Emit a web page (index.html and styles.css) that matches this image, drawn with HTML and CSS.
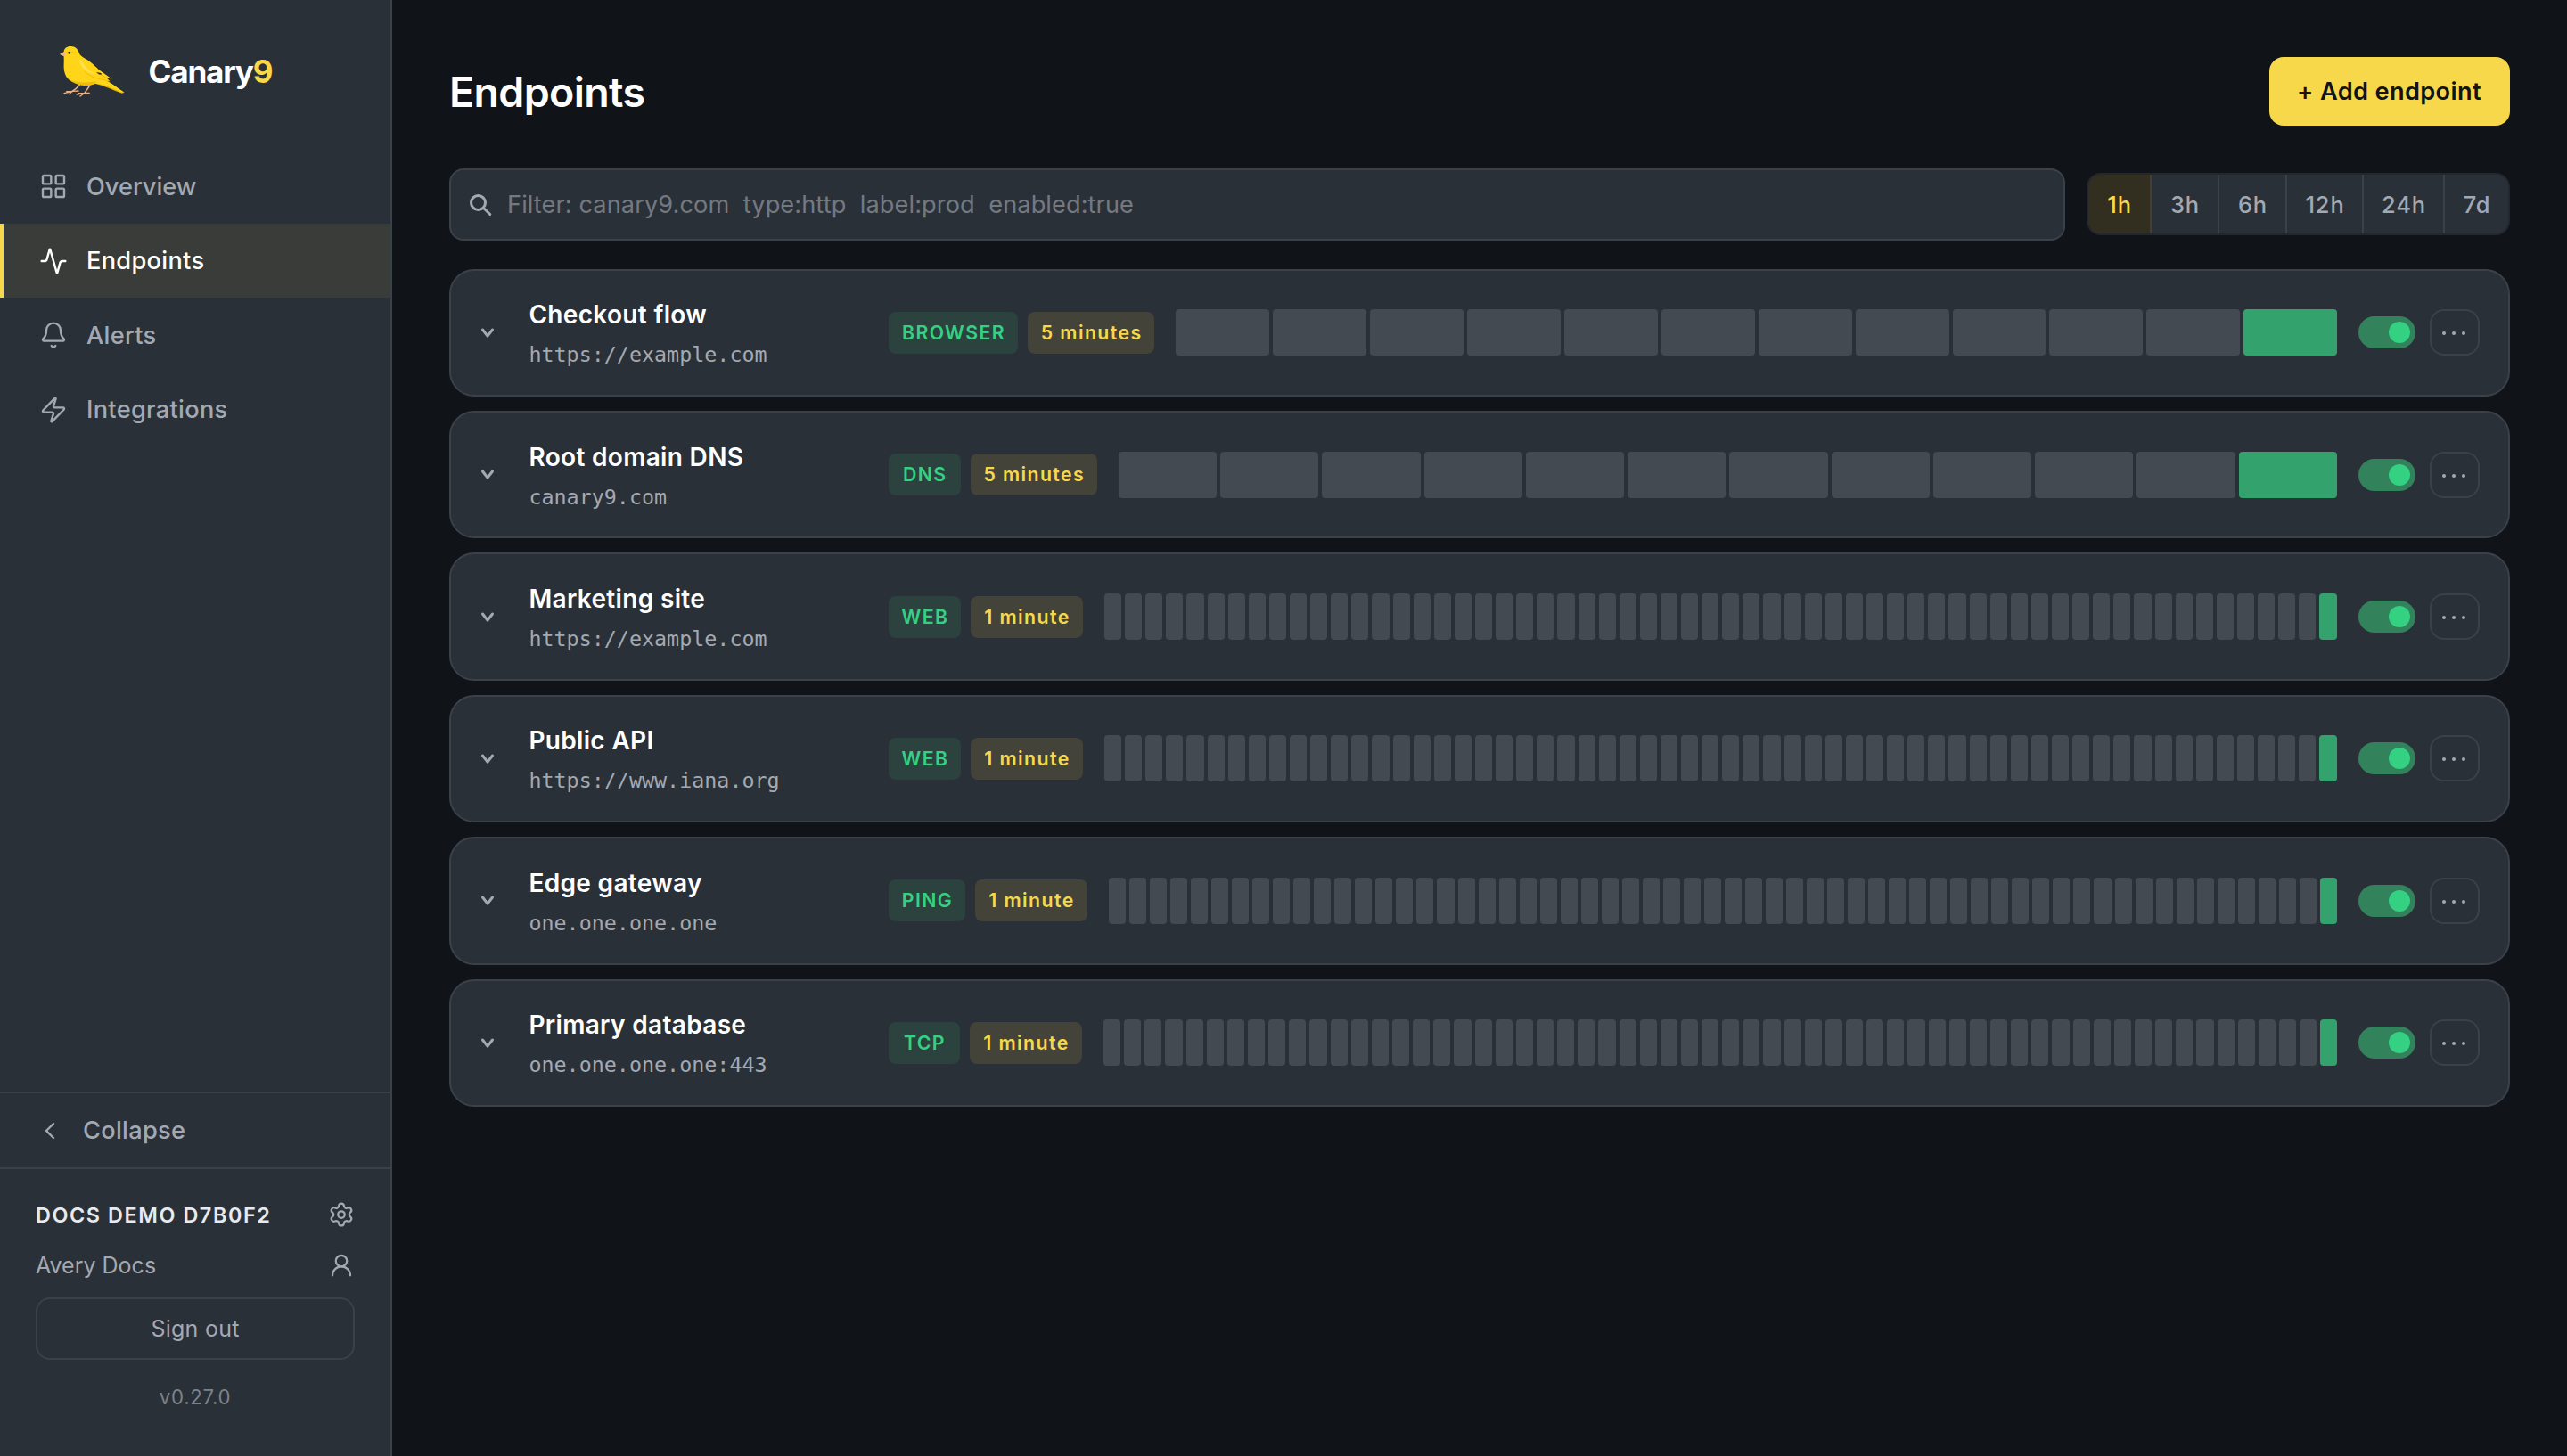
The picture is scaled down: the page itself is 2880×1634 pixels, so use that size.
FILE: index.html
```
<!DOCTYPE html>
<html lang="en">
<head>
<meta charset="utf-8">
<title>Endpoints – Canary9</title>
<link rel="stylesheet" href="styles.css">
</head>
<body>
<div class="app">
  <aside class="sidebar">
    <div class="brand">
      <svg class="brand-bird" viewBox="0 0 270 240" aria-hidden="true">
        <g fill="none" stroke="#e9b184" stroke-linecap="round" stroke-linejoin="round">
          <path stroke-width="4.5" d="M88 166C80 176 72 182 62 188M122 168C116 178 110 185 105 193"/>
          <path stroke-width="4" d="M64 187 36 194M64 187 44 188M64 187 52 197M66 187 84 186M105 193 78 198M105 193 84 194M105 193 90 204M106 193 121 193"/>
        </g>
        <path fill="#e8b400" d="M144 148C180 152 208 172 239 191L230 194C200 184 176 170 140 162Z"/>
        <path fill="#ffd51a" d="M150 141C184 148 206 170 236 190L226 190C196 176 172 164 134 160Z"/>
        <path fill="#ffd51a" d="M35 58C34 43 45 36 58 36C74 36 83 46 87 60C93 72 106 76 118 84C134 95 145 110 158 122C164 130 166 142 158 150C148 158 140 164 122 167C96 170 66 160 50 146C36 132 34 112 35 92C36 78 34 70 35 58Z"/>
        <path fill="#efbd08" d="M50 146C74 158 106 160 146 154C138 163 130 166 118 167.500C92 169 66 160 50 146Z"/>
        <path fill="#ffd51a" d="M85 80C112 76 136 98 152 114L197 146L180 143L190 154C156 150 118 142 100 116C92 104 86 92 85 80Z"/>
        <path fill="#ffe14f" d="M86 80C98 84 104 102 116 114C126 122 136 126 146 129C124 128 104 118 97 106C91 96 87 90 86 80Z"/>
        <path fill="none" stroke="#e8b400" stroke-width="2" d="M104 120C124 140 154 146 188 153M150 128 182 143"/>
        <path fill="#30280c" d="M144 123 160 126 162 131 152 130ZM178 142 197 146 188 146Z"/>
        <path fill="#f0b48c" d="M36 54 21 62 26 66 36 70 41 62Z"/>
        <path fill="none" stroke="#e8b400" stroke-width="2" d="M42 58C48 54 60 53 66 57"/>
        <circle cx="53" cy="58" r="4" fill="#1c1608"/>
      </svg>
      <span class="brand-name">Canary<span class="brand-accent">9</span></span>
    </div>
    <nav class="nav">
      <a class="nav-item nav-item-overview"><svg class="icon" viewBox="0 0 24 24"><rect x="3" y="3" width="7" height="7" rx="1"/><rect x="14" y="3" width="7" height="7" rx="1"/><rect x="14" y="14" width="7" height="7" rx="1"/><rect x="3" y="14" width="7" height="7" rx="1"/></svg><span>Overview</span></a>
      <a class="nav-item nav-item-active"><svg class="icon" viewBox="0 0 24 24"><path d="M22 12h-2.480a2 2 0 0 0-1.930 1.460l-2.350 8.360a.25.25 0 0 1-.48 0L9.240 2.180a.25.25 0 0 0-.48 0l-2.350 8.360A2 2 0 0 1 4.490 12H2"/></svg><span>Endpoints</span></a>
      <a class="nav-item"><svg class="icon" viewBox="0 0 24 24"><path d="M10.268 21a2 2 0 0 0 3.464 0"/><path d="M3.262 15.326A1 1 0 0 0 4 17h16a1 1 0 0 0 .74-1.673C19.410 13.956 18 12.499 18 8A6 6 0 0 0 6 8c0 4.499-1.411 5.956-2.738 7.326"/></svg><span>Alerts</span></a>
      <a class="nav-item"><svg class="icon" viewBox="0 0 24 24"><path d="M4 14a1 1 0 0 1-.78-1.630l9.900-10.200a.5.5 0 0 1 .86.46l-1.920 6.020A1 1 0 0 0 13 10h7a1 1 0 0 1 .78 1.630l-9.900 10.200a.5.5 0 0 1-.86-.46l1.920-6.020A1 1 0 0 0 11 14z"/></svg><span>Integrations</span></a>
    </nav>
    <button class="collapse"><svg class="icon" viewBox="0 0 24 24"><path d="m15 18-6-6 6-6"/></svg><span>Collapse</span></button>
    <div class="account">
      <div class="account-row">
        <span class="org">DOCS DEMO D7B0F2</span>
        <svg class="icon icon-sm" viewBox="0 0 24 24"><path d="M9.671 4.136a2.340 2.340 0 0 1 4.659 0 2.340 2.340 0 0 0 3.319 1.915 2.340 2.340 0 0 1 2.330 4.033 2.340 2.340 0 0 0 0 3.831 2.340 2.340 0 0 1-2.330 4.033 2.340 2.340 0 0 0-3.319 1.915 2.340 2.340 0 0 1-4.659 0 2.340 2.340 0 0 0-3.320-1.915 2.340 2.340 0 0 1-2.330-4.033 2.340 2.340 0 0 0 0-3.831A2.340 2.340 0 0 1 6.350 6.051a2.340 2.340 0 0 0 3.319-1.915"/><circle cx="12" cy="12" r="3"/></svg>
      </div>
      <div class="account-row">
        <span class="user">Avery Docs</span>
        <svg class="icon icon-sm" viewBox="0 0 24 24"><circle cx="12" cy="8" r="5"/><path d="M20 21a8 8 0 0 0-16 0"/></svg>
      </div>
      <button class="sign-out">Sign out</button>
      <div class="version">v0.27.0</div>
    </div>
  </aside>
  <main class="main">
    <header class="page-head">
      <h1 class="page-title">Endpoints</h1>
      <button class="add-button">+ Add endpoint</button>
    </header>
    <div class="toolbar">
      <div class="search">
        <svg class="search-icon" viewBox="0 0 28 28"><circle cx="11.500" cy="11.500" r="8"/><path d="m17.500 17.500 7.300 7"/></svg>
        <span class="search-hint">Filter: canary9.com  type:http  label:prod  enabled:true</span>
      </div>
      <div class="ranges">
        <span class="range range-active">1h</span><span class="range">3h</span><span class="range">6h</span><span class="range range-12h">12h</span><span class="range range-24h">24h</span><span class="range range-7d">7d</span>
      </div>
    </div>
    <section class="list">
      <article class="card">
        <svg class="chevron" viewBox="0 0 18 18"><path d="M3.500 5 9 12.200 14.500 5"/></svg>
        <div class="info"><div class="name">Checkout flow</div><div class="target">https://example.com</div></div>
        <div class="badges"><span class="badge badge-type badge-browser">BROWSER</span><span class="badge badge-interval badge-5m">5 minutes</span></div>
        <div class="bars" data-count="12"></div>
        <span class="toggle"></span>
        <button class="more"><i></i><i></i><i></i></button>
      </article>
      <article class="card">
        <svg class="chevron" viewBox="0 0 18 18"><path d="M3.500 5 9 12.200 14.500 5"/></svg>
        <div class="info"><div class="name">Root domain DNS</div><div class="target">canary9.com</div></div>
        <div class="badges"><span class="badge badge-type badge-dns">DNS</span><span class="badge badge-interval badge-5m">5 minutes</span></div>
        <div class="bars" data-count="12"></div>
        <span class="toggle"></span>
        <button class="more"><i></i><i></i><i></i></button>
      </article>
      <article class="card">
        <svg class="chevron" viewBox="0 0 18 18"><path d="M3.500 5 9 12.200 14.500 5"/></svg>
        <div class="info"><div class="name">Marketing site</div><div class="target">https://example.com</div></div>
        <div class="badges"><span class="badge badge-type badge-web">WEB</span><span class="badge badge-interval">1 minute</span></div>
        <div class="bars" data-count="60"></div>
        <span class="toggle"></span>
        <button class="more"><i></i><i></i><i></i></button>
      </article>
      <article class="card">
        <svg class="chevron" viewBox="0 0 18 18"><path d="M3.500 5 9 12.200 14.500 5"/></svg>
        <div class="info"><div class="name">Public API</div><div class="target">https://www.iana.org</div></div>
        <div class="badges"><span class="badge badge-type badge-web">WEB</span><span class="badge badge-interval">1 minute</span></div>
        <div class="bars" data-count="60"></div>
        <span class="toggle"></span>
        <button class="more"><i></i><i></i><i></i></button>
      </article>
      <article class="card">
        <svg class="chevron" viewBox="0 0 18 18"><path d="M3.500 5 9 12.200 14.500 5"/></svg>
        <div class="info"><div class="name">Edge gateway</div><div class="target">one.one.one.one</div></div>
        <div class="badges"><span class="badge badge-type badge-ping">PING</span><span class="badge badge-interval">1 minute</span></div>
        <div class="bars" data-count="60"></div>
        <span class="toggle"></span>
        <button class="more"><i></i><i></i><i></i></button>
      </article>
      <article class="card">
        <svg class="chevron" viewBox="0 0 18 18"><path d="M3.500 5 9 12.200 14.500 5"/></svg>
        <div class="info"><div class="name">Primary database</div><div class="target">one.one.one.one:443</div></div>
        <div class="badges"><span class="badge badge-type">TCP</span><span class="badge badge-interval">1 minute</span></div>
        <div class="bars" data-count="60"></div>
        <span class="toggle"></span>
        <button class="more"><i></i><i></i><i></i></button>
      </article>
    </section>
  </main>
</div>
<script src="app.js"></script>
</body>
</html>
```
FILE: styles.css
```
:root {
  --bg: #101318;
  --panel: #2a3038;
  --line: #3b4149;
  --muted: #a3a9b2;
  --yellow: #f7d84b;
  --green: #35d182;
}

* { box-sizing: border-box; }

body {
  margin: 0;
  background: var(--bg);
  color: #fff;
  font-family: Inter, "Liberation Sans", sans-serif;
}

button {
  margin: 0;
  padding: 0;
  border: 0;
  background: none;
  color: inherit;
  font: inherit;
}

.app { display: flex; height: 1634px; }

/* Sidebar */
.sidebar {
  display: flex;
  flex-direction: column;
  flex: none;
  width: 440px;
  background: var(--panel);
  border-right: 2px solid var(--line);
  color: var(--muted);
}

.brand {
  display: flex;
  align-items: center;
  gap: 16.500px;
  height: 167.300px;
  padding: 40px 0 47.300px 60px;
}
.brand-bird { width: 90px; height: 80px; }
.brand-name { color: #fff; font-size: 35px; font-weight: 700; letter-spacing: -1.150px; }
.brand-accent { color: var(--yellow); }

.icon {
  flex: none;
  width: 32px;
  height: 32px;
  fill: none;
  stroke: currentColor;
  stroke-width: 1.8;
  stroke-linecap: round;
  stroke-linejoin: round;
}
.icon-sm { width: 30px; height: 30px; }

.nav { flex: 1; }
.nav-item,
.collapse {
  display: flex;
  align-items: center;
  gap: 21px;
  font-size: 27.200px;
  font-weight: 500;
  letter-spacing: .3px;
}
.nav-item { height: 83.500px; padding-left: 40px; border-left: 4px solid transparent; }
.nav-item-overview { letter-spacing: 0; }
.nav-item-active { background: #393c38; border-left-color: var(--yellow); color: #fff; }

.collapse { height: 85px; padding-left: 40px; border-top: 2px solid var(--line); }

.account {
  display: flex;
  flex-direction: column;
  height: 324px;
  padding: 35px 40px 0;
  border-top: 2px solid var(--line);
}
.account-row {
  display: flex;
  align-items: center;
  justify-content: space-between;
  height: 32px;
  margin-bottom: 24.500px;
}
.org { color: #e8eaed; font-size: 23.400px; font-weight: 600; letter-spacing: 1.570px; }
.user { font-size: 25px; }
.sign-out {
  height: 70px;
  margin-top: -4px;
  border: 2px solid var(--line);
  border-radius: 16px;
  font-size: 25px;
  letter-spacing: .25px;
}
.version {
  margin-top: 27px;
  color: #7c828a;
  font-size: 22.200px;
  line-height: 30px;
  letter-spacing: .7px;
  text-align: center;
}

/* Page header */
.main { flex: 1; padding: 64px 64px 0; }
.page-head { display: flex; align-items: center; justify-content: space-between; height: 77px; }
.page-title { margin: 1px 0 0; font-size: 46.500px; font-weight: 600; letter-spacing: -.65px; }
.add-button {
  width: 270px;
  height: 77px;
  padding-right: 1px;
  border-radius: 16px;
  background: var(--yellow);
  color: #101318;
  font-size: 27.200px;
  font-weight: 600;
  letter-spacing: .36px;
}

/* Filter bar and time ranges */
.toolbar { display: flex; align-items: center; gap: 24px; margin-top: 48px; }
.search {
  display: flex;
  flex: 1;
  align-items: center;
  gap: 16px;
  height: 81px;
  padding-left: 19px;
  border: 2px solid var(--line);
  border-radius: 16px;
  background: var(--panel);
}
.search-icon { width: 28px; height: 28px; fill: none; stroke: var(--muted); stroke-width: 3; stroke-linecap: round; }
.search-hint { color: #747980; font-size: 27.200px; letter-spacing: .08px; white-space: pre; }

.ranges {
  display: flex;
  width: 475px;
  height: 70px;
  margin-top: -1px;
  border: 2px solid #23282e;
  border-radius: 16px;
  background: var(--panel);
  overflow: hidden;
}
.range {
  display: flex;
  align-items: center;
  justify-content: center;
  width: 76px;
  padding-left: 1px;
  border-right: 2px solid var(--line);
  color: var(--muted);
  font-size: 25.400px;
  font-weight: 500;
  letter-spacing: .9px;
}
.range-active { width: 71px; background: #322f20; border-right-color: #453e2e; color: var(--yellow); }
.range-12h { width: 86px; }
.range-24h { width: 91px; }
.range-7d { width: 71px; border-right: 0; }

/* Endpoint list */
.list { display: flex; flex-direction: column; gap: 16px; margin-top: 31.600px; }
.card {
  display: flex;
  align-items: center;
  height: 143.400px;
  padding: 0 32px;
  border: 2px solid var(--line);
  border-radius: 28px;
  background: var(--panel);
}
.chevron {
  flex: none;
  width: 18px;
  height: 18px;
  margin: 1px 37.400px 0 0;
  fill: none;
  stroke: var(--muted);
  stroke-width: 3;
  stroke-linecap: round;
  stroke-linejoin: round;
}
.info { flex: none; width: 403.600px; }
.name { margin-bottom: 6px; font-size: 28px; font-weight: 600; line-height: 44px; letter-spacing: .33px; }
.target { color: var(--muted); font: 23.360px/34px "DejaVu Sans Mono", monospace; }

.badges { display: flex; flex: none; gap: 11px; margin-right: 24px; }
.badge {
  width: 80px;
  height: 47px;
  padding-left: 1px;
  border-radius: 8px;
  font-size: 21.300px;
  font-weight: 600;
  line-height: 47.500px;
  letter-spacing: 1.400px;
  text-align: center;
}
.badge-type { background: #2b423f; color: var(--green); }
.badge-browser { width: 145px; }
.badge-dns { width: 80.600px; }
.badge-web { width: 81px; }
.badge-ping { width: 86px; }
.badge-interval { width: 126px; background: #43433a; color: var(--yellow); }
.badge-5m { width: 142.400px; }

.bars { display: flex; flex: 1; gap: 4px; height: 52px; }
.bar { flex: 1; border-radius: 4px; background: #444a51; }
.bar-up { background: #33a26c; }

.toggle {
  display: flex;
  flex: none;
  align-items: center;
  justify-content: flex-end;
  width: 64px;
  height: 36px;
  margin: 0 16px 0 24px;
  padding-right: 6px;
  border-radius: 18px;
  background: #32825c;
}
.toggle::before { content: ""; width: 24px; height: 24px; border-radius: 50%; background: var(--green); }

.more {
  display: flex;
  flex: none;
  align-items: center;
  justify-content: center;
  gap: 7px;
  width: 56px;
  height: 52px;
  padding: 2px 3px 0 0;
  border: 2px solid var(--line);
  border-radius: 16px;
}
.more i { width: 4px; height: 4px; border-radius: 50%; background: var(--muted); }
```
FILE: app.js
```
// Fill each history strip: every slot is empty except the most recent check.
document.querySelectorAll('.bars').forEach((strip) => {
  const count = Number(strip.dataset.count);
  for (let i = 0; i < count; i++) {
    const bar = document.createElement('span');
    bar.className = i === count - 1 ? 'bar bar-up' : 'bar';
    strip.appendChild(bar);
  }
});
```
